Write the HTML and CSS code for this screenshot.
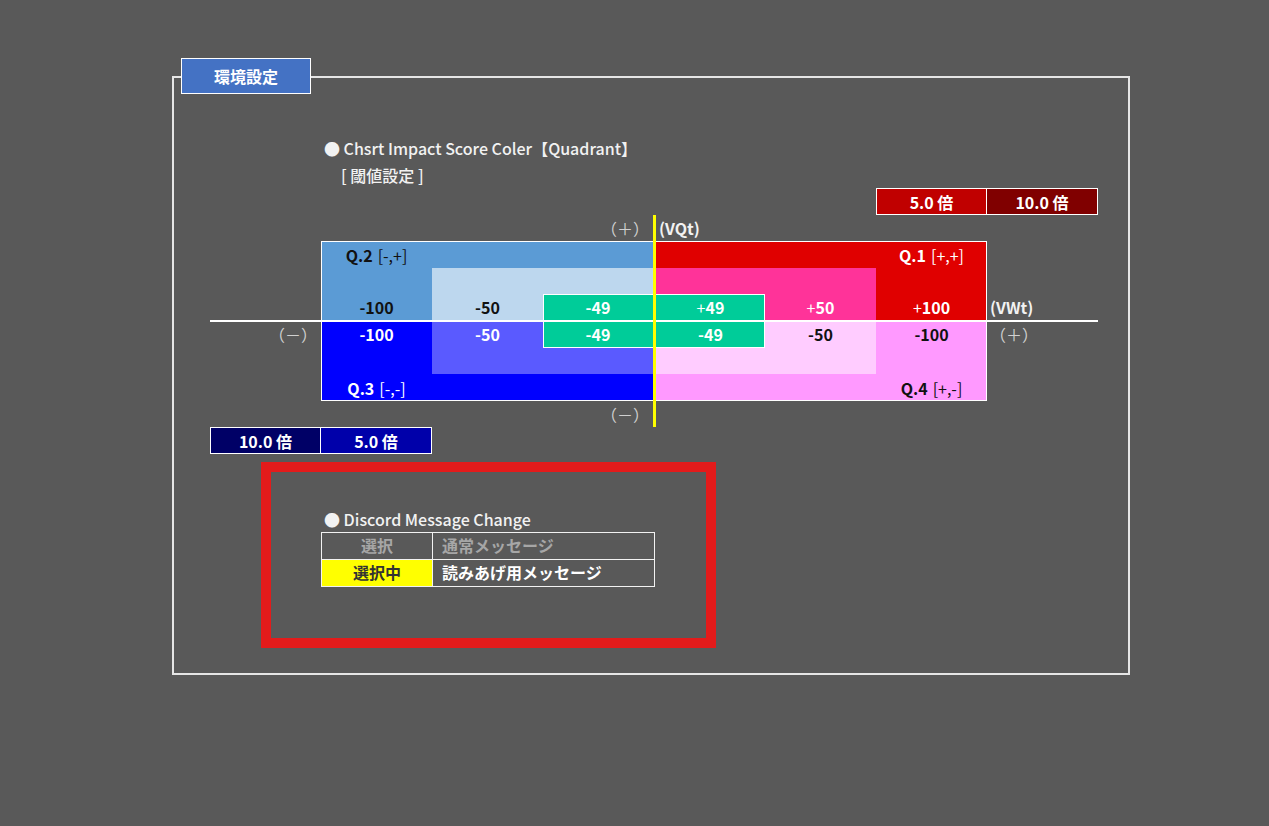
FILE: index.html
```html
<!DOCTYPE html>
<html>

<head>
  <meta charset="utf-8">
  <link rel="stylesheet" href="styles.css">
</head>

<body>
  <div class="panel">
    <div class="panel-tab">環境設定</div>

    <div class="sheet-title">● Chsrt Impact Score Coler【Quadrant】</div>
    <div class="sheet-sub">[ 閾値設定 ]</div>

    <div class="quad-grid">
      <!-- multiplier boxes -->
      <div class="cell rate rate-5-up col-g row-1">5.0 倍</div>
      <div class="cell rate rate-10-up col-h row-1 no-left">10.0 倍</div>

      <!-- quadrant backgrounds -->
      <div class="q2"></div>
      <div class="q1"></div>
      <div class="q2-inner"></div>
      <div class="q1-inner"></div>
      <div class="mid-up"></div>
      <div class="q3"></div>
      <div class="q4"></div>
      <div class="q3-inner"></div>
      <div class="q4-inner"></div>
      <div class="mid-down"></div>
      <div class="axis-x"></div>
      <div class="axis-y"></div>

      <!-- labels -->
      <div class="cell axis-label right col-d row-2">（＋）</div>
      <div class="cell axis-name left col-e row-2">(VQt)</div>

      <div class="cell dark col-b row-3">Q.2<span class="thin">[-,+]</span></div>
      <div class="cell col-g row-3">Q.1<span class="thin">[+,+]</span></div>

      <div class="cell dark col-b row-5">-100</div>
      <div class="cell dark col-c row-5">-50</div>
      <div class="cell col-d row-5">-49</div>
      <div class="cell col-e row-5"><span class="sign">+</span>49</div>
      <div class="cell col-f row-5"><span class="sign">+</span>50</div>
      <div class="cell col-g row-5"><span class="sign">+</span>100</div>
      <div class="cell axis-name left col-h row-5">(VWt)</div>

      <div class="cell axis-label right col-a row-7">（－）</div>
      <div class="cell col-b row-7">-100</div>
      <div class="cell col-c row-7">-50</div>
      <div class="cell col-d row-7">-49</div>
      <div class="cell col-e row-7">-49</div>
      <div class="cell dark col-f row-7">-50</div>
      <div class="cell dark col-g row-7">-100</div>
      <div class="cell axis-label left col-h row-7">（＋）</div>

      <div class="cell col-b row-9">Q.3<span class="thin">[-,-]</span></div>
      <div class="cell dark col-g row-9">Q.4<span class="thin">[+,-]</span></div>

      <div class="cell axis-label right col-d row-10">（－）</div>

      <div class="cell rate rate-10-down col-a row-11">10.0 倍</div>
      <div class="cell rate rate-5-down col-b row-11 no-left">5.0 倍</div>
    </div>

    <div class="discord-box">
      <div class="sheet-title discord-title">● Discord Message Change</div>
      <table class="msg-table">
        <tr>
          <td class="pick">選択</td>
          <td class="msg off">通常メッセージ</td>
        </tr>
        <tr>
          <td class="pick on">選択中</td>
          <td class="msg">読みあげ用メッセージ</td>
        </tr>
      </table>
    </div>
  </div>
</body>

</html>
```

FILE: styles.css
```css
* {
  box-sizing: border-box;
}

body {
  margin: 0;
  background-color: #595959;
  color: #fff;
  font-family: "Noto Sans CJK JP", "Noto Sans", sans-serif;
  font-size: 16px;
}

.panel {
  position: relative;
  width: 958px;
  height: 599px;
  margin: 76px 0 0 172px;
  padding: 57px 0 0 36px;
  border: 2px solid #e6e6e6;
}

.panel-tab {
  position: absolute;
  left: 7px;
  top: -20px;
  width: 130px;
  height: 36px;
  display: flex;
  align-items: center;
  justify-content: center;
  background: #4472c4;
  border: 1px solid #fff;
  font-weight: 700;
}

.sheet-title {
  height: 26px;
  margin-left: 111px;
  padding-left: 3px;
  display: flex;
  align-items: center;
  font-weight: 500;
  color: #f2f2f2;
  white-space: pre;
}

.sheet-sub {
  height: 27px;
  margin-left: 111px;
  padding-left: 20px;
  display: flex;
  align-items: center;
  font-weight: 500;
  color: #f2f2f2;
  white-space: pre;
}

/* quadrant chart */
.quad-grid {
  display: grid;
  width: 888px;
  grid-template-columns: 111px 111px 111px 110px 3px 109px 111px 111px 111px;
  grid-template-rows: 27px 26px 27px 26px 26px 2px 26px 26px 27px 26px 27px;
}

.cell {
  display: flex;
  align-items: center;
  justify-content: center;
  font-weight: 700;
  white-space: nowrap;
}

.cell.left {
  justify-content: flex-start;
  padding-left: 3px;
}

.cell.right {
  justify-content: flex-end;
  padding-right: 4px;
}

.cell.dark {
  color: #111;
}

.thin {
  font-weight: 400;
  margin-left: 5px;
}

.sign {
  font-weight: 400;
}

.col-a { grid-column: 1; }
.col-b { grid-column: 2; }
.col-c { grid-column: 3; }
.col-d { grid-column: 4; }
.col-e { grid-column: 6; }
.col-f { grid-column: 7; }
.col-g { grid-column: 8; }
.col-h { grid-column: 9; }

.row-1 { grid-row: 1; }
.row-2 { grid-row: 2; }
.row-3 { grid-row: 3; }
.row-5 { grid-row: 5; }
.row-7 { grid-row: 7; padding-bottom: 3px; }
.row-9 { grid-row: 9; }
.row-10 { grid-row: 10; }
.row-11 { grid-row: 11; }

.rate {
  border: 1px solid #fff;
}

.rate.no-left {
  border-left: none;
}

.rate-5-up { background: #c00000; }
.rate-10-up { background: #800000; }
.rate-10-down { background: #000066; }
.rate-5-down { background: #0000aa; }

.axis-label {
  font-weight: 400;
  color: #d0d0d0;
}

.axis-name {
  color: #f2f2f2;
}

.q2 {
  grid-column: 2 / 5;
  grid-row: 3 / 6;
  background: #5b9bd5;
  border-top: 1px solid #fff;
  border-left: 1px solid #fff;
}

.q1 {
  grid-column: 5 / 9;
  grid-row: 3 / 6;
  background: #e00000;
  border-top: 1px solid #fff;
  border-right: 1px solid #fff;
}

.q2-inner {
  grid-column: 3 / 5;
  grid-row: 4 / 6;
  background: #bdd7ee;
}

.q1-inner {
  grid-column: 5 / 8;
  grid-row: 4 / 6;
  background: #ff3399;
}

.q3 {
  grid-column: 2 / 5;
  grid-row: 7 / 10;
  background: #0000ff;
  border-bottom: 1px solid #fff;
  border-left: 1px solid #fff;
}

.q4 {
  grid-column: 5 / 9;
  grid-row: 7 / 10;
  background: #ff99ff;
  border-bottom: 1px solid #fff;
  border-right: 1px solid #fff;
}

.q3-inner {
  grid-column: 3 / 5;
  grid-row: 7 / 9;
  background: #5a5aff;
}

.q4-inner {
  grid-column: 5 / 8;
  grid-row: 7 / 9;
  background: #ffccff;
}

.mid-up,
.mid-down {
  grid-column: 4 / 7;
  background: #00cc99;
  border: 1px solid #fff;
}

.mid-up {
  grid-row: 5;
  border-bottom: none;
}

.mid-down {
  grid-row: 7;
  border-top: none;
  padding-bottom: 0;
}

.axis-x {
  grid-column: 1 / -1;
  grid-row: 6;
  background: #fff;
}

.axis-y {
  grid-column: 5;
  grid-row: 2 / 11;
  background: #ffff00;
}

/* discord message setting */
.discord-box {
  width: 455px;
  height: 186px;
  margin: 8px 0 0 51px;
  padding: 34px 0 0 50px;
  border: 10px solid #e31b1b;
}

.discord-title {
  margin-left: 0;
}

.msg-table {
  border-collapse: collapse;
}

.msg-table td {
  height: 26px;
  padding: 0 0 2px;
  border: 1px solid #f2f2f2;
  font-weight: 700;
}

.msg-table .pick {
  width: 111px;
  text-align: center;
  color: #a6a6a6;
}

.msg-table .msg {
  width: 222px;
  padding-left: 9px;
}

.msg-table .off {
  color: #a6a6a6;
}

.msg-table .pick.on {
  background: #ffff00;
  color: #333;
}
```
